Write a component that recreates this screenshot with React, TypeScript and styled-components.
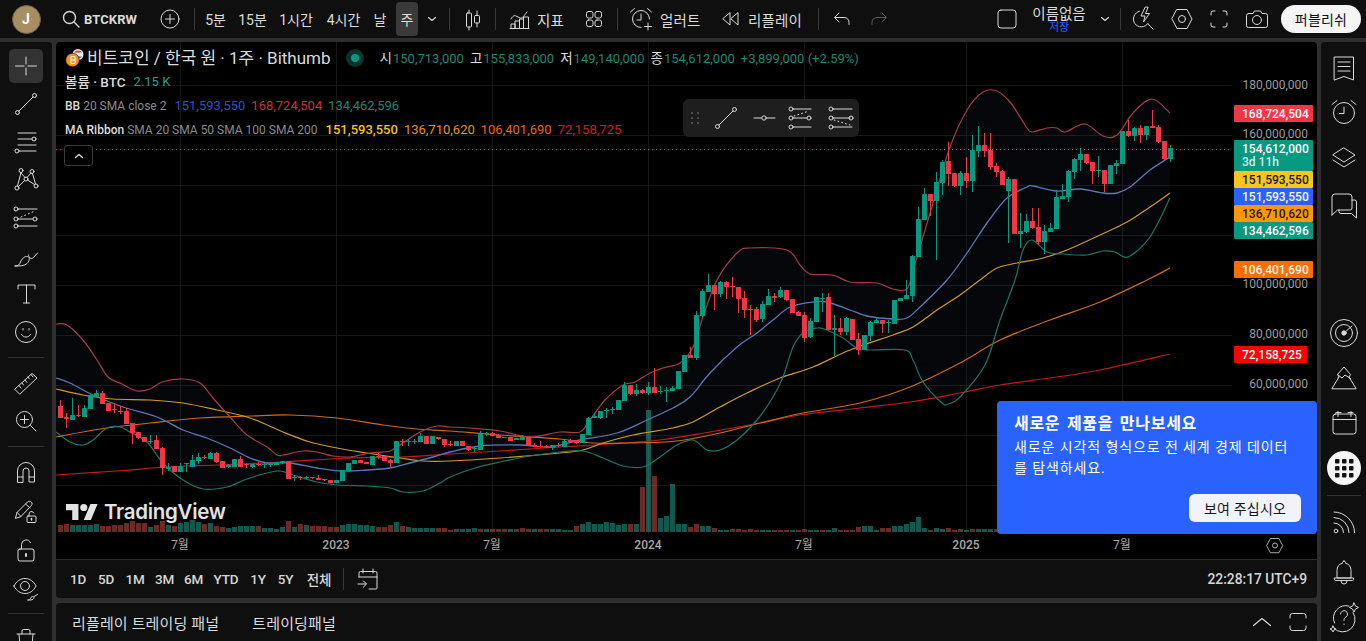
import React from "react";
import styled, { createGlobalStyle } from "styled-components";

const Global = createGlobalStyle`
  html, body { margin: 0; padding: 0; height: 100%; background: #2e2e2e; overflow: hidden; }
  #root { height: 100%; }
  * { box-sizing: border-box; }
  body { font-family: Roboto, "Noto Sans CJK KR", sans-serif; color: #dbdbdb; }
`;

const Page = styled.div`display:flex;flex-direction:column;width:1366px;height:641px;overflow:hidden;background:#2e2e2e;`;
const TopBar = styled.header`display:flex;align-items:center;height:38px;flex:none;background:#0f0f0f;`;
const Main = styled.div`display:flex;flex:1;min-height:0;margin-top:4px;gap:4px;`;
const Spacer = styled.div`flex:1;`;
const Sep = styled.div<{ $h?: number; $ml?: number }>`width:1px;height:${p => p.$h ?? 22}px;background:#3a3a3a;flex:none;margin-left:${p => p.$ml ?? 0}px;`;

const Avatar = styled.div`width:52px;height:38px;flex:none;display:flex;align-items:center;justify-content:center;
  &::before{content:"J";width:27px;height:27px;border-radius:50%;background:#a88f62;color:#fff;font:700 14px/27px Roboto,sans-serif;text-align:center;border:1px solid #6f6044;}`;
const Btn = styled.div<{ $w: number; $active?: boolean; $pl?: number; $dim?: boolean; $gap?: number }>`
  width:${p => p.$w}px;flex:none;height:34px;display:flex;align-items:center;gap:${p => p.$gap ?? 7}px;
  justify-content:${p => (p.$pl !== undefined ? "flex-start" : "center")};
  padding-left:${p => p.$pl ?? 0}px;border-radius:4px;font-size:14px;white-space:nowrap;font-weight:400;
  background:${p => (p.$active ? "#3a3a3a" : "transparent")};
  color:${p => (p.$dim ? "#5c5c5c" : "#dbdbdb")};
`;
const Symbol = styled.span`font:700 13px Roboto,sans-serif;letter-spacing:.1px;`;
const Label = styled.span`font-size:14.5px;letter-spacing:.2px;`;
const NameBox = styled.div`width:62px;flex:none;display:flex;flex-direction:column;align-items:center;line-height:1;font-size:14.5px;height:34px;padding-top:6px;`;
const Saved = styled.span`font-size:11px;color:#2962ff;margin-top:-1px;`;
const Publish = styled.div`width:80px;height:28px;margin-left:6px;margin-right:5px;flex:none;border-radius:14px;background:#f5f5f5;color:#0f0f0f;display:flex;align-items:center;justify-content:center;font-size:14px;letter-spacing:.2px;`;

const LeftBar = styled.aside`width:52px;flex:none;background:#0f0f0f;display:flex;flex-direction:column;padding-top:5px;border-top-right-radius:4px;align-items:center;overflow:hidden;`;
const ToolBtn = styled.div<{ $active?: boolean; $mt?: number }>`width:34px;height:34px;margin:${p => 2 + (p.$mt ?? 0)}px 0 2px;flex:none;display:flex;align-items:center;justify-content:center;border-radius:5px;background:${p => (p.$active ? "#333" : "transparent")};`;
const ToolSep = styled.div`width:36px;height:1px;flex:none;background:#333;margin:6px 0;`;

const RightBar = styled.aside`width:45px;flex:none;background:#0f0f0f;display:flex;flex-direction:column;align-items:center;padding-top:3px;border-top-left-radius:4px;overflow:hidden;`;
const SideBtn = styled.div<{ $mt?: number }>`width:45px;height:45px;flex:none;display:flex;align-items:center;justify-content:center;margin-top:${p => p.$mt ?? 0}px;`;
const AppsBtn = styled.div`width:34px;height:34px;border-radius:50%;background:#f5f5f5;display:flex;align-items:center;justify-content:center;`;
const SideSep = styled.div`width:34px;height:1px;background:#333;flex:none;margin:5px 0 3px;`;

const Center = styled.main`flex:1;min-width:0;display:flex;flex-direction:column;`;
const ChartPanel = styled.section`position:relative;height:518px;flex:none;background:#000;border-top-left-radius:4px;border-top-right-radius:4px;overflow:hidden;border-bottom:1px solid #2a2a2a;`;
const ChartSvg = styled.svg`display:block;width:1261px;height:518px;`;

const Legend = styled.div`position:absolute;left:9px;top:4px;display:flex;flex-direction:column;font-size:13px;`;
const LegendRow = styled.div`display:flex;align-items:center;height:24px;white-space:nowrap;`;
const Title = styled.span`font-size:17px;color:#dbdbdb;margin-left:3px;line-height:20px;`;
const LiveDot = styled.span`width:18px;height:18px;margin-left:15px;border-radius:50%;background:#06332c;display:flex;align-items:center;justify-content:center;&::after{content:"";width:8px;height:8px;border-radius:50%;background:#089981;}`;
const Ohlc = styled.span`margin-left:16px;display:flex;align-items:baseline;line-height:16px;`;
const Key = styled.span<{ $ml?: number }>`color:#dbdbdb;margin-left:${p => p.$ml ?? 6}px;margin-right:1px;font-size:13.5px;`;
const Num = styled.span<{ $c: string; $ml?: number; $b?: boolean }>`color:${p => p.$c};margin-left:${p => p.$ml ?? 0}px;font-weight:${p => (p.$b ? 500 : 400)};line-height:16px;`;
const Name = styled.span`color:#dbdbdb;font-weight:500;font-size:12px;`;
const VolName = styled.span`color:#dbdbdb;font-weight:500;font-size:13.5px;line-height:16px;`;
const Params = styled.span`color:#8a8a8a;margin-left:3px;font-size:12px;`;
const Collapse = styled.div`position:absolute;left:8px;top:103px;width:29px;height:21px;border:1px solid #3a3a3a;border-radius:3px;background:#000;display:flex;align-items:center;justify-content:center;`;

const Floating = styled.div`position:absolute;left:627px;top:57px;width:176px;height:38px;background:#1e1e1e;border-radius:6px;display:flex;align-items:center;padding-left:8px;`;
const Drag = styled.div`margin-right:6px;display:flex;`;
const FloatBtn = styled.div`width:38px;height:34px;display:flex;align-items:center;justify-content:center;`;

const Watermark = styled.div`position:absolute;left:10px;top:457px;display:flex;align-items:center;gap:6px;color:#e2e2e2;font:600 20.5px Inter,sans-serif;letter-spacing:-.3px;`;

const Popup = styled.div`position:absolute;left:941px;top:359px;width:320px;height:133px;background:#2962ff;border-radius:4px;padding:13px 17px 0;color:#fff;display:flex;flex-direction:column;
  &::after{content:"";position:absolute;right:-4px;top:62px;border-left:4px solid #2962ff;border-top:5px solid transparent;border-bottom:5px solid transparent;}`;
const PopTitle = styled.div`font-size:16px;font-weight:700;line-height:20px;letter-spacing:.7px;word-spacing:2px;`;
const PopBody = styled.div`font-size:14px;line-height:21px;margin-top:3px;letter-spacing:.9px;width:280px;`;
const PopBtn = styled.div`align-self:flex-end;width:112px;height:28px;margin-top:15px;margin-right:-1px;border-radius:6px;background:#f0f3fa;color:#131722;font-size:14px;display:flex;align-items:center;justify-content:center;letter-spacing:.2px;`;

const RangeBar = styled.div`height:38px;flex:none;background:#0f0f0f;display:flex;align-items:center;padding-left:8px;border-bottom-left-radius:4px;border-bottom-right-radius:4px;`;
const RangeBtn = styled.div<{ $w: number }>`width:${p => p.$w}px;flex:none;text-align:center;font-size:13.5px;font-weight:500;color:#d6d6d6;letter-spacing:-.2px;`;
const CalBtn = styled.div`width:46px;flex:none;display:flex;justify-content:center;`;
const Clock = styled.div`font-size:13.8px;font-weight:500;color:#d6d6d6;margin-right:10px;`;

const BottomPanel = styled.div`flex:1;margin-top:5px;background:#0f0f0f;border-top-left-radius:4px;border-top-right-radius:4px;display:flex;align-items:center;padding-left:16px;gap:33px;font-size:15px;letter-spacing:.15px;color:#dbdbdb;`;
const BottomIcons = styled.div`margin-left:auto;display:flex;align-items:center;gap:16px;padding-right:9px;`;

const AxisText = styled.text`font:400 12px Roboto,sans-serif;fill:#9c9c9c;`;
const TimeText = styled.text<{ $b?: boolean }>`font:${p => (p.$b ? 500 : 400)} 12px Roboto,"Noto Sans CJK KR",sans-serif;fill:#a8a8a8;`;
const TagText = styled.text`font:500 12px Roboto,sans-serif;`;

type IP = { s?: number; v?: number; w?: number; c?: string; children: React.ReactNode };
const I = ({ s = 28, v = 28, w = 1, c = "#d9d9d9", children }: IP) => (
  <svg width={s} height={s} viewBox={`0 0 ${v} ${v}`} fill="none" stroke={c} strokeWidth={w} strokeLinecap="round" strokeLinejoin="round">{children}</svg>
);

const Icons = {
  search: <I s={20} v={20} w={1.4}><circle cx="8.5" cy="8.5" r="6" /><path d="M13 13l5 5" /></I>,
  plus: <I s={20} v={20}><circle cx="10" cy="10" r="9" /><path d="M10 5.5v9M5.5 10h9" /></I>,
  chevron: <I s={14} v={14} w={1.1}><path d="M3.5 5.5L7 8.5l3.5-3" /></I>,
  candles: <I><path d="M10 5v3M10 22v3M18 6v4.5M18 18v4" /><rect x="7.5" y="8" width="5" height="14" rx="1" /><rect x="15.5" y="10.5" width="5" height="7.5" rx="1" /></I>,
  indicators: <I s={24} v={24}><path d="M3 12c2-3 3-4 5-3l4 2c2 .8 4-2 7-6" /><path d="M3 21v-4h4v4M7 21v-7h4.500v7M11.500 21V12h4v9M15.500 21v-11h5v11M2 21.500h19" /></I>,
  grid: <I s={18} v={18}><rect x="1.500" y="1.500" width="6.500" height="6.500" rx="2" /><rect x="10" y="1.500" width="6.500" height="6.500" rx="2" /><rect x="1.500" y="10" width="6.500" height="6.500" rx="2" /><rect x="10" y="10" width="6.500" height="6.500" rx="2" /></I>,
  alertPlus: <I s={24} v={24}><path d="M20.500 12A8.500 8.500 0 1 0 12 20.500" /><path d="M12 7v6H8M1.500 5l4-3.500M22.500 5l-4-3.500M19 16v7M15.500 19.500h7" /></I>,
  rewind: <I s={20} v={20}><path d="M9 4v12L2 10zM17 4v12l-7-6z" /></I>,
  undo: <I s={20} v={20}><path d="M7 4L2.500 8.500 7 13M3 8.500h9c3 0 5 2 5 5v2" /></I>,
  redo: <I s={20} v={20} c="#5c5c5c"><path d="M13 4l4.500 4.500L13 13M17 8.500H8c-3 0-5 2-5 5v2" /></I>,
  square: <I s={20} v={20}><rect x="1" y="1" width="18" height="18" rx="3" /></I>,
  bolt: <I s={26} v={26}><path d="M9.500 5.200a8 8 0 1 0 8.500 12.300M18 18l5 5" /><path d="M15 1.500L11 10h4l-1.500 6 6-8.500h-4l2.500-6z" /></I>,
  hex: <I s={22} v={22}><path d="M6 1.500h10L21 11l-5 9.500H6L1 11z" /><circle cx="11" cy="11" r="3.500" /></I>,
  full: <I s={18} v={18}><path d="M1 5V3a2 2 0 0 1 2-2h2M13 1h2a2 2 0 0 1 2 2v2M17 13v2a2 2 0 0 1-2 2h-2M5 17H3a2 2 0 0 1-2-2v-2" /></I>,
  camera: <I s={24} v={24}><path d="M3.500 6.500H8L9.500 4h6L17 6.500h3.500a2 2 0 0 1 2 2v10a2 2 0 0 1-2 2h-17a2 2 0 0 1-2-2v-10a2 2 0 0 1 2-2z" /><circle cx="12" cy="13" r="4.500" /></I>,
  cross: <I w={1}><path d="M14 5v7M14 16v7M3.500 14H12M16 14h8.500" /></I>,
  trend: <I><circle cx="5.500" cy="22.500" r="2" /><circle cx="22.500" cy="5.500" r="2" /><path d="M7 21L21 7" /></I>,
  fib: <I><path d="M6 5h18M6 11h14M6 17h18M7.500 23H24" /><circle cx="22" cy="11" r="2" /><circle cx="5" cy="23" r="2" /></I>,
  xabcd: <I><circle cx="9" cy="4.500" r="2" /><circle cx="20" cy="5.500" r="2" /><circle cx="14" cy="13" r="2" /><circle cx="5" cy="22" r="2" /><circle cx="24" cy="20" r="2" /><path d="M9 6.500L5.500 20M8 6L13 11.500M15 11.500l4-4.500M20.500 7.500l3 10.500M6.500 20.500L12.700 14.500M15.500 14l7 4.500" /></I>,
  gann: <I><path d="M6 5h19M6 15h15M6 22h19" /><circle cx="4" cy="5" r="2" /><circle cx="4" cy="15" r="2" /><circle cx="4" cy="22" r="2" /><circle cx="23" cy="15" r="2" /><path d="M9 13l14-6" strokeDasharray="1 3" /></I>,
  brush: <I><path d="M3 24c3.500 0 4.500-1.500 5.500-4 1-2.800 4-6 7-5.500 2.500.6 2.500 4-.5 7-2.500 2.500-7 2.500-12 2.500z" /><path d="M16.500 13c0 3 3 4.500 5 2.500l4-4.500" /></I>,
  text: <I><path d="M6 9V5h17v4M14.500 5v18M11.500 23h6" /></I>,
  smile: <I><circle cx="14" cy="14" r="10.500" /><path d="M9.500 16.500c2 3.500 7 3.500 9 0M11 10.500v1.500M17 10.500v1.500" /></I>,
  ruler: <I><path d="M3 20L20 4.500l5 4.500L8 25z" /><path d="M7 16.500l2 2.500M10 14l1.500 2M13 11l2 2.500M16 8l1.500 2M19 5.500l2 2.500" /></I>,
  zoomIn: <I><circle cx="12.500" cy="12.500" r="8" /><path d="M18.500 18.500L24 24M12.500 8.500v8M8.500 12.500h8" /></I>,
  magnet: <I><path d="M5.500 24V13a8.500 8.500 0 0 1 17 0v11h-5.500V13a3 3 0 0 0-6 0v11zM5.500 19h5.500M17 19h5.500" /></I>,
  pencilLock: <I><path d="M3.500 21l1.500-5.500L15.500 5c1.200-1 2.800-1 3.800 0s1 2.500 0 3.600L9 19.500z" /><path d="M13.500 7l4.500 4M5 15.500l4 4" /><rect x="15" y="19" width="9" height="6.500" rx="1" /><path d="M17 19v-2a2.500 2.500 0 0 1 4.800-1" /><path d="M19.500 21.500v1.500" strokeWidth="1.500" /></I>,
  lock: <I><rect x="6" y="13" width="16" height="12" rx="2" /><path d="M9.500 13V8.500a4.700 4.700 0 0 1 9-1.800" /><path d="M14 18v2" strokeWidth="2" /></I>,
  eye: <I><path d="M2 12c2.500-5 6.500-7.500 11-7.500S21.500 7 24 12c-2.500 5-6.500 7.500-11 7.500S4.500 17 2 12z" /><circle cx="13" cy="12" r="4.500" /><path d="M16 26c1.500 0 2-.5 2.500-1.800.6-1.400 2-2 3-1.500.8.600.5 1.800-.5 2.600-1 .8-3 .7-5 .7zM22 22.500l3.500-2" /></I>,
  trash: <I><path d="M5 9h18M10 9V6a1.500 1.500 0 0 1 1.500-1.500h5A1.500 1.500 0 0 1 18 6v3M7 9l1.500 18h11L21 9" /></I>,
  watch: <I s={26} v={26}><path d="M3.500 2h19v23l-9.500-3.500L3.500 25z" /><path d="M7 7h12M7 11.500h12M7 16h12" /></I>,
  alarm: <I s={28}><circle cx="14" cy="14" r="10.500" /><path d="M14 8v6.500H9.500M2 5.500l5-4M26 5.500l-5-4" /></I>,
  layers: <I s={26} v={26}><path d="M13 3l11 7-11 7-11-7zM2 15l11 7 11-7" /></I>,
  chat: <I s={28}><path d="M2 24V6a3 3 0 0 1 3-3h14a3 3 0 0 1 3 3v11a2 2 0 0 1-2 2H7.500L2 24z" /><path d="M22 9h2.500a2 2 0 0 1 2 2v16l-5-4.500H11a2 2 0 0 1-2-2V19" /></I>,
  radar: <I s={30} v={30}><circle cx="15" cy="15" r="13.500" /><circle cx="15" cy="15" r="8.500" /><circle cx="15" cy="15" r="2.200" fill="#d9d9d9" /><path d="M15 15l8-7" /></I>,
  peaks: <I s={28}><path d="M2 24.500L9 13l-1.500-2.500L14 3l6.500 7.500L19 13l7 11.500zM7.500 10.500L12 14l3-3 5.500 3.500M9 13l-1 .5" /></I>,
  calendar: <I s={28}><rect x="3" y="5" width="23" height="20" rx="2.500" /><path d="M3 10.500h23M8 2.500v5M21 2.500v5M6 3.500h5M18 3.500h5" /></I>,
  rss: <I s={26} v={26}><circle cx="5" cy="22" r="1.800" /><path d="M3 14a9.500 9.500 0 0 1 9.500 9.500M3 8.500a15 15 0 0 1 15 15M3 3a20.500 20.500 0 0 1 20.500 20.500" /></I>,
  bell: <I s={26} v={26}><path d="M13 2a1.500 1.500 0 0 1 1.500 1.500v.7c3.800.8 5.500 3.800 5.500 7.300v7.500H6v-7.500c0-3.500 1.700-6.500 5.500-7.300v-.7A1.500 1.500 0 0 1 13 2z" /><path d="M3.500 19h19v1.500a1 1 0 0 1-1 1h-17a1 1 0 0 1-1-1zM10 22a3 3 0 0 0 6 0" /></I>,
  help: <I s={32} v={32}><path d="M25 11.500a12.500 12.500 0 0 1-19 16M6.500 22A12.500 12.500 0 0 1 21 5" /><path d="M12.500 13a3.500 3.500 0 1 1 5.500 3c-1.500 1-2 1.500-2 3.500M16 23v.5" /><path d="M26 2l1.500 3 3 1.500-3 1.500L26 11l-1.500-3-3-1.500 3-1.500zM5 25l1 2 2 1-2 1-1 2-1-2-2-1 2-1z" /></I>,
  gotoDate: <I s={22} v={22}><path d="M3 9V5a1.500 1.500 0 0 1 1.500-1.500h15A1.500 1.500 0 0 1 21 5v15a1 1 0 0 1-1 1h-7M3 9h18M7 1v4M17 1v4M2 16h8M7.500 13l3 3-3 3" /></I>,
  fiDrag: <svg width="10" height="14" viewBox="0 0 10 14" fill="#4c4c4c"><rect x="0" y="1" width="2" height="2" /><rect x="6" y="1" width="2" height="2" /><rect x="0" y="6" width="2" height="2" /><rect x="6" y="6" width="2" height="2" /><rect x="0" y="11" width="2" height="2" /><rect x="6" y="11" width="2" height="2" /></svg>,
  hLine: <I><path d="M4 14h7.500M16.500 14H25" /><circle cx="14" cy="14" r="2.200" /></I>,
  ftA: <I><path d="M5 5h18M5 23h18M5 14h14" /><circle cx="3" cy="5" r="2" /><circle cx="3" cy="14" r="2" /><circle cx="3" cy="23" r="2" /><circle cx="21" cy="14" r="2" /><path d="M6 12l15-5" strokeDasharray="1 3" /></I>,
  ftB: <I><path d="M7 5h19M7 14h17M7 23h19" /><circle cx="5" cy="5" r="2" /><circle cx="5" cy="14" r="2" /><circle cx="5" cy="23" r="2" /><circle cx="25" cy="14" r="2" /><path d="M8 16l16 5" strokeDasharray="1 3" /></I>,
  up: <I s={14} v={14} w={1.4}><path d="M3.500 8.500L7 5.500l3.500 3" /></I>,
  upBig: <I s={20} v={20} w={1.2}><path d="M1.500 13.500L10 6.500l8.500 7" /></I>,
  maximize: <I s={20} v={20}><path d="M2 6V4a2.500 2.500 0 0 1 2.500-2.500h11A2.500 2.500 0 0 1 18 4v2M2 14v2a2.500 2.500 0 0 0 2.500 2.500h11A2.500 2.500 0 0 0 18 16v-2" /></I>,
};

const BtcLogo = () => (
  <svg width="19" height="20" viewBox="0 0 19 20">
    <circle cx="13" cy="6.500" r="5.500" fill="#e8e8ee" />
    <path d="M9 4.500a5 5 0 0 1 8 0z" fill="#cd3a4a" /><path d="M9 8.500a5 5 0 0 0 8 0z" fill="#3a5fcd" />
    <circle cx="7.500" cy="12" r="6.800" fill="#f7931a" stroke="#000" strokeWidth=".6" />
    <path d="M6 8.500v7M6 8.500h2.500a1.700 1.700 0 0 1 0 3.500H6h3a1.800 1.800 0 0 1 0 3.500H6" stroke="#fff" strokeWidth="1.100" fill="none" />
  </svg>
);

const AppsDots = () => (
  <svg width="20" height="20" viewBox="0 0 20 20" fill="#111">
    {[1, 8, 15].map(y => [1, 8, 15].map(x => <rect key={`${x}-${y}`} x={x} y={y} width="4.500" height="4.500" rx="1" />))}
  </svg>
);

/* u,t,b,h,l : up flag, body top, body bottom, wick top, wick bottom (page pixels) */
const C: number[][] = [
  [0,406,418,400,418],[0,417,419,413,428],[1,415,420,398,420],[0,415,416,405,417],[1,408,417,405,417],[1,395,409,394,409],[1,393,397,390,398],[0,393,404,391,404],[0,403,411,403,411],[0,409,410,403,413],
  [0,411,412,406,414],[0,411,424,408,424],[0,423,433,423,444],[0,432,438,432,439],[0,437,442,437,442],[1,441,442,435,444],[0,440,449,435,449],[0,448,468,447,475],[1,467,469,463,471],[0,466,472,466,472],
  [1,466,472,463,472],[1,463,464,463,472],[1,460,467,455,467],[1,457,461,453,464],[0,457,458,455,459],[1,453,459,452,459],[0,453,462,452,463],[0,461,468,461,468],[1,465,467,464,468],[1,459,467,459,467],
  [0,459,467,456,467],[0,464,465,463,468],[1,464,467,464,468],[0,464,465,462,466],[1,464,465,463,468],[1,464,465,463,467],[1,462,465,462,465],[1,461,463,461,464],[0,461,479,461,479],[1,477,478,475,481],
  [0,477,478,476,480],[1,477,478,476,479],[0,477,478,477,479],[0,478,480,475,480],[0,479,480,479,481],[0,480,483,480,483],[1,480,483,480,483],[1,470,481,470,481],[1,463,471,463,471],[1,460,464,460,464],
  [0,460,463,460,463],[0,462,464,462,464],[1,456,465,456,465],[0,456,457,453,459],[0,456,461,456,461],[0,460,463,459,467],[1,441,463,441,463],[0,441,442,439,446],[1,441,442,439,446],[1,441,442,439,444],
  [1,436,442,433,442],[0,436,444,436,444],[1,436,444,436,444],[0,437,439,437,440],[0,439,445,439,447],[0,444,445,441,446],[1,441,446,441,446],[0,441,446,441,446],[0,446,450,446,451],[1,448,449,447,452],
  [1,434,450,431,450],[1,433,434,432,436],[0,433,436,432,436],[0,435,438,434,438],[1,437,438,437,438],[0,437,441,437,441],[1,438,440,438,440],[1,437,440,435,440],[0,437,446,437,446],[0,445,447,443,447],
  [0,446,447,441,447],[0,446,447,445,448],[1,445,448,445,450],[0,445,446,443,447],
  [1,441,447,440,447],[0,440,442,439,443],[0,440,443,440,444],[1,434,443,434,443],[1,418,435,417,435],[1,416,418,413,418],[1,411,418,411,419],[1,410,411,408,418],[1,409,410,407,414],[1,400,410,400,410],
  [1,385,401,382,401],[0,385,394,385,395],[1,390,394,384,396],[0,390,393,389,394],[1,387,393,382,395],[0,387,393,368,393],[1,391,392,386,394],[1,390,391,387,402],[1,388,391,386,391],[1,371,389,371,389],
  [1,355,372,355,372],[0,355,358,347,358],[1,315,358,311,360],[1,291,316,289,317],[1,285,292,274,292],[0,285,294,285,310],[1,282,294,281,297],[0,282,287,281,299],[0,286,287,277,297],[0,287,299,287,313],
  [0,298,310,291,318],[0,309,310,305,335],[0,309,320,307,322],[1,304,319,301,322],[1,296,305,289,305],[0,296,298,293,302],[1,290,297,287,298],[0,290,300,290,301],[0,299,313,299,313],[0,312,316,311,316],
  [0,315,338,312,342],[1,321,337,318,338],[1,297,322,297,322],[1,298,299,293,312],[0,297,330,293,330],[1,328,330,315,356],[0,328,332,318,335],[1,318,332,317,335],[0,319,340,319,340],[0,339,350,333,355],
  [1,335,350,335,350],[1,322,336,321,341],[1,320,323,317,323],[0,320,324,320,333],[1,322,323,320,333],[1,300,324,300,324],[1,298,301,298,301],[1,295,299,280,299],[1,256,296,255,302],[1,219,257,207,257],
  [1,194,220,188,220],[0,194,201,194,216],[1,182,201,172,260],[1,162,183,160,195],[0,161,174,142,186],[0,173,186,173,187],[1,173,186,171,195],[0,173,181,157,188],[1,150,181,135,192],[1,145,151,126,157],
  [0,145,151,133,157],[0,150,167,133,170],[0,166,172,163,177],[0,171,185,170,185],[1,179,191,177,243],[0,179,234,179,234],[1,231,234,213,248],[1,221,232,214,233],[0,221,228,208,229],[0,227,242,208,245],
  [1,231,242,225,254],[1,228,232,223,232],[1,197,229,190,229],[1,196,199,184,199],[1,171,197,170,202],[1,159,172,158,179],[1,154,160,148,171],[0,154,163,154,164],[0,162,171,162,184],[1,170,171,156,177],
  [0,170,184,170,192],[1,165,184,165,184],[1,163,166,160,174],[1,131,164,131,164],[0,131,136,120,137],[1,128,136,127,141],[0,128,135,125,143],[1,126,135,126,140],[0,126,128,110,128],[0,127,142,125,143],
  [0,141,159,141,160],[1,148,159,145,162],
];

const VOL: number[] = [
  -7,-8,7,7,7,7,8,-6,-6,-7, -7,-9,-11,-9,-9,5,-7,-11,7,-6,
  9,10,12,10,-8,9,-6,-5,4,5, 6,6,6,-6,4,4,3,5,-11,5,
  -8,7,-6,-6,-6,-5,-5,7,8,8, 7,7,6,-5,-5,-7,10,-6,5,4,
  4,4,4,-4,-4,-2,3,3,3,4, -3,3,-3,-3,-3,3,-3,-4,-3,3, -3,-3,3,3,
  2,2,-6,8,10,8,8,10,9,7,8,-8,8,-45,122,-56,14,16,48,8,8,-5,-8,6,6,-4,2,2,-3,-3,-2,-3,-2,2,2,-2,-2,-2,2,-2,-3,2,2,-2,2,4,-2,-2,-2,-5,6,6,2,-4,-4,6,6,8,10,15,4,-2,4,3,-4,-2,
  -3,2,-3,3,3,3,-3,
];

type P = [number, number][];
const UPPER: P = [[56,324],[67,325],[83,340],[97,360],[108,377],[122,384],[137,391],[150,389],[162,382],[183,379],[200,383],[213,398],[230,417],[247,435],[267,447],[277,455],[283,455],[303,451],[317,452],[333,456],[350,457],[370,453],[390,451],[403,443],[420,432],[437,426],[450,427],[470,428],[500,431],[530,437],[560,432],[580,432],[590,420],[605,400],[623,385],[635,382],[650,373],[663,368],[680,363],[693,347],[703,317],[717,280],[737,253],[750,248],[787,250],[800,265],[810,274],[833,275],[850,282],[877,283],[893,289],[907,289],[913,270],[918,254],[933,203],[950,147],[967,110],[983,92],[997,91],[1010,102],[1020,117],[1027,128],[1032,132],[1047,128],[1057,128],[1065,132],[1085,124],[1103,136],[1117,135],[1133,113],[1152,99],[1170,113]];
const MID: P = [[56,378],[70,383],[93,395],[123,407],[157,417],[183,430],[207,438],[230,448],[250,458],[267,463],[290,463],[317,468],[343,471],[367,470],[390,468],[410,463],[433,457],[450,452],[480,446],[520,445],[550,447],[580,440],[617,433],[647,420],[673,408],[690,397],[710,373],[737,347],[757,333],[773,320],[790,307],[813,302],[827,302],[850,310],[867,316],[893,319],[907,318],[920,307],[947,280],[967,253],[987,223],[1007,198],[1027,187],[1033,186],[1057,191],[1080,189],[1103,193],[1117,193],[1130,187],[1150,170],[1170,157]];
const LOWER: P = [[56,432],[70,442],[83,445],[93,440],[107,428],[120,427],[130,432],[147,442],[163,463],[183,480],[203,489],[227,487],[247,479],[267,473],[280,471],[293,475],[317,482],[337,485],[367,486],[390,488],[403,492],[423,491],[440,483],[450,477],[475,468],[500,462],[530,456],[560,452],[583,451],[603,458],[623,466],[643,467],[660,457],[677,445],[693,440],[707,450],[720,450],[737,440],[757,420],[773,397],[783,377],[793,347],[803,333],[817,328],[827,330],[843,338],[857,348],[870,350],[905,350],[913,360],[923,382],[942,403],[948,404],[960,397],[985,365],[1000,320],[1015,280],[1023,250],[1032,240],[1047,252],[1063,254],[1087,255],[1103,251],[1115,252],[1128,257],[1150,237],[1170,198]];
const MA50: P = [[56,389],[83,395],[113,399],[150,400],[183,403],[217,410],[250,418],[283,432],[310,442],[337,448],[367,453],[400,458],[423,461],[450,461],[500,458],[560,453],[583,450],[603,443],[633,435],[673,428],[693,422],[720,407],[747,393],[780,378],[813,367],[850,350],[893,335],[913,327],[937,310],[960,295],[980,280],[997,268],[1017,263],[1043,258],[1067,250],[1100,235],[1127,222],[1150,207],[1170,193]];
const MA100: P = [[56,437],[100,429],[150,423],[200,418],[250,416],[290,415],[337,418],[383,425],[417,429],[450,431],[500,435],[560,439],[593,443],[627,443],[677,441],[720,433],[760,423],[803,413],[860,403],[910,387],[960,363],[1000,340],[1050,320],[1100,302],[1147,280],[1170,268]];
const MA200: P = [[56,475],[117,471],[167,467],[217,465],[283,462],[350,458],[400,457],[450,454],[500,451],[560,447],[610,444],[660,440],[710,432],[760,423],[800,415],[860,408],[910,402],[960,393],[1000,385],[1050,378],[1100,370],[1170,354]];

const smooth = (p: P) => {
  let d = `M${p[0][0]} ${p[0][1]}`;
  for (let i = 0; i < p.length - 1; i++) {
    const a = p[Math.max(0, i - 1)], b = p[i], c = p[i + 1], e = p[Math.min(p.length - 1, i + 2)];
    d += `C${(b[0] + (c[0] - a[0]) / 6).toFixed(1)} ${(b[1] + (c[1] - a[1]) / 6).toFixed(1)} ${(c[0] - (e[0] - b[0]) / 6).toFixed(1)} ${(c[1] - (e[1] - b[1]) / 6).toFixed(1)} ${c[0]} ${c[1]}`;
  }
  return d;
};
const band = () => {
  const a = smooth(UPPER);
  const r = [...LOWER].reverse();
  return `${a}L${smooth(r).slice(1)}Z`;
};

const V_GRID = [180, 336, 492, 648, 804, 966, 1122];
const H_GRID = [85, 135, 185, 235, 285, 335, 385, 435, 485];
const AXIS: [string, number][] = [["180,000,000", 85], ["160,000,000", 134], ["100,000,000", 284], ["80,000,000", 334], ["60,000,000", 384]];
const TIMES: [string, number, boolean][] = [["7월", 180, false], ["2023", 336, true], ["7월", 492, false], ["2024", 648, true], ["7월", 804, false], ["2025", 966, true], ["7월", 1122, false]];
const TAGS: [string, number, number, string, string, number][] = [
  ["168,724,504", 105, 17, "#f23645", "#fff", 79],
  ["151,593,550", 171, 17, "#f7c51e", "#131722", 79],
  ["151,593,550", 188, 17, "#2962ff", "#fff", 79],
  ["136,710,620", 205, 17, "#ff9800", "#131722", 79],
  ["134,462,596", 222, 17, "#089981", "#fff", 79],
  ["106,401,690", 261, 17, "#ff6d00", "#fff", 79],
  ["72,158,725", 346, 17, "#f00", "#fff", 73],
];

const Chart = () => (
  <ChartSvg viewBox="56 42 1261 518">
    {V_GRID.map(x => <path key={x} d={`M${x + .5} 42V534`} stroke="#161616" />)}
    {H_GRID.map(y => <path key={y} d={`M56 ${y + .5}H1232`} stroke="#161616" />)}
    <path d={band()} fill="#5a80c8" fillOpacity=".045" />
    {VOL.map((v, i) => {
      const h = Math.abs(v);
      return <rect key={i} x={58 + 6 * i} y={532 - h} width="5" height={h} fill={v > 0 ? "rgba(38,166,145,.52)" : "rgba(225,85,80,.48)"} />;
    })}
    <path d={smooth(MA200)} stroke="#c01c1c" strokeWidth="1.2" fill="none" />
    <path d={smooth(MA100)} stroke="#cc6a1e" strokeWidth="1.2" fill="none" />
    <path d={smooth(MA50)} stroke="#cf9a2c" strokeWidth="1.2" fill="none" />
    <path d={smooth(UPPER)} stroke="#a63c48" strokeWidth="1.2" fill="none" />
    <path d={smooth(LOWER)} stroke="#1f7565" strokeWidth="1.2" fill="none" />
    <path d={smooth(MID)} stroke="#5c78b8" strokeWidth="1.3" fill="none" />
    {C.map((c, i) => {
      const x = 60 + 6 * i;
      const col = c[0] ? "#089981" : "#f23645";
      return (
        <g key={i} fill={col}>
          <rect x={x} y={c[3]} width="1" height={Math.max(1, c[4] - c[3])} />
          <rect x={x - 2} y={c[1]} width="5" height={Math.max(1, c[2] - c[1])} rx=".5" />
        </g>
      );
    })}
    <path d="M56 149.500H1232" stroke="#089981" strokeDasharray="1 3" />
    {AXIS.map(([t, y]) => <AxisText key={t} x="1308" y={y + 4} textAnchor="end">{t}</AxisText>)}
    {TIMES.map(([t, x, b], i) => <TimeText key={i} $b={b} x={x} y="549" textAnchor="middle">{t}</TimeText>)}
    {TAGS.map(([t, y, h, bg, fg, w], i) => (
      <g key={i}>
        <rect x="1234" y={y} width={w} height={h} rx="1" fill={bg} />
        <TagText x="1242" y={y + 13} fill={fg}>{t}</TagText>
      </g>
    ))}
    <rect x="1234" y="140" width="79" height="31" rx="1" fill="#089981" />
    <TagText x="1242" y="153" fill="#fff">154,612,000</TagText>
    <TagText x="1242" y="166" fill="#cdeee8">3d 11h</TagText>
    <g transform="translate(1268 538)" fill="none" stroke="#b0b0b0">
      <path d="M2.500 0.500h9l4 7.500-4 7.500h-9l-4-7.500z" transform="scale(.95)" />
      <circle cx="7" cy="7.500" r="2.500" />
    </g>
  </ChartSvg>
);

const LEFT_TOP = ["trend", "fib", "xabcd", "gann", "brush", "text", "smile"] as const;

export default function App() {
  return (
    <Page>
      <Global />
      <TopBar>
        <Avatar />
        <Btn $w={94} $pl={9} $gap={3}>{Icons.search}<Symbol>BTCKRW</Symbol></Btn>
        <Btn $w={48}>{Icons.plus}</Btn>
        <Sep />
        <Btn $w={41}>5분</Btn>
        <Btn $w={33}>15분</Btn>
        <Btn $w={54}>1시간</Btn>
        <Btn $w={41}>4시간</Btn>
        <Btn $w={32}>날</Btn>
        <Btn $w={22} $active>주</Btn>
        <Btn $w={28}>{Icons.chevron}</Btn>
        <Sep $ml={3} />
        <Btn $w={45}>{Icons.candles}</Btn>
        <Sep />
        <Btn $w={78} $pl={12} $gap={5}>{Icons.indicators}<Label>지표</Label></Btn>
        <Btn $w={40}>{Icons.grid}</Btn>
        <Sep $ml={3} />
        <Btn $w={94} $pl={11}>{Icons.alertPlus}<Label>얼러트</Label></Btn>
        <Btn $w={106} $pl={9}>{Icons.rewind}<Label>리플레이</Label></Btn>
        <Sep />
        <Btn $w={46}>{Icons.undo}</Btn>
        <Btn $w={28}>{Icons.redo}</Btn>
        <Spacer />
        <Btn $w={42}>{Icons.square}</Btn>
        <NameBox>이름없음<Saved>저장</Saved></NameBox>
        <Btn $w={30}>{Icons.chevron}</Btn>
        <Sep />
        <Btn $w={44}>{Icons.bolt}</Btn>
        <Btn $w={34}>{Icons.hex}</Btn>
        <Btn $w={40}>{Icons.full}</Btn>
        <Btn $w={36}>{Icons.camera}</Btn>
        <Publish>퍼블리쉬</Publish>
      </TopBar>
      <Main>
        <LeftBar>
          <ToolBtn $active>{Icons.cross}</ToolBtn>
          {LEFT_TOP.map(k => <ToolBtn key={k}>{Icons[k]}</ToolBtn>)}
          <ToolSep />
          <ToolBtn>{Icons.ruler}</ToolBtn>
          <ToolBtn>{Icons.zoomIn}</ToolBtn>
          <ToolSep />
          <ToolBtn>{Icons.magnet}</ToolBtn>
          <ToolBtn $mt={1}>{Icons.pencilLock}</ToolBtn>
          <ToolBtn $mt={1}>{Icons.lock}</ToolBtn>
          <ToolBtn>{Icons.eye}</ToolBtn>
          <ToolSep />
          <ToolBtn>{Icons.trash}</ToolBtn>
        </LeftBar>
        <Center>
          <ChartPanel>
            <Chart />
            <Legend>
              <LegendRow>
                <BtcLogo />
                <Title>비트코인 / 한국 원 · 1주 · Bithumb</Title>
                <LiveDot />
                <Ohlc>
                  <Key $ml={0}>시</Key><Num $c="#1d8672">150,713,000</Num>
                  <Key>고</Key><Num $c="#1d8672">155,833,000</Num>
                  <Key>저</Key><Num $c="#1d8672">149,140,000</Num>
                  <Key>종</Key><Num $c="#1d8672">154,612,000</Num>
                  <Num $c="#1d8672" $ml={6}>+3,899,000 (+2.59%)</Num>
                </Ohlc>
              </LegendRow>
              <LegendRow><VolName>볼륨 · BTC</VolName><Num $c="#2a9d8a" $ml={8}>2.15 K</Num></LegendRow>
              <LegendRow>
                <Name>BB</Name><Params>20 SMA close 2</Params>
                <Num $c="#2b50c8" $ml={8}>151,593,550</Num>
                <Num $c="#c8323f" $ml={6}>168,724,504</Num>
                <Num $c="#1d8672" $ml={6}>134,462,596</Num>
              </LegendRow>
              <LegendRow>
                <Name>MA Ribbon</Name><Params>SMA 20 SMA 50 SMA 100 SMA 200</Params>
                <Num $c="#f0c420" $ml={8} $b>151,593,550</Num>
                <Num $c="#e8930e" $ml={6}>136,710,620</Num>
                <Num $c="#e8660c" $ml={6}>106,401,690</Num>
                <Num $c="#d11c1c" $ml={6}>72,158,725</Num>
              </LegendRow>
            </Legend>
            <Collapse>{Icons.up}</Collapse>
            <Floating>
              <Drag>{Icons.fiDrag}</Drag>
              <FloatBtn>{Icons.trend}</FloatBtn>
              <FloatBtn>{Icons.hLine}</FloatBtn>
              <FloatBtn>{Icons.ftA}</FloatBtn>
              <FloatBtn>{Icons.ftB}</FloatBtn>
            </Floating>
            <Watermark>
              <svg width="32" height="20" viewBox="0 2 36 22" fill="#e2e2e2"><path d="M14 22H7V11H0V4h14v18zM28 22h-8l7.500-18h8L28 22z" /><circle cx="20" cy="8" r="4" /></svg>
              <span>TradingView</span>
            </Watermark>
            <Popup>
              <PopTitle>새로운 제품을 만나보세요</PopTitle>
              <PopBody>새로운 시각적 형식으로 전 세계 경제 데이터를 탐색하세요.</PopBody>
              <PopBtn>보여 주십시오</PopBtn>
            </Popup>
          </ChartPanel>
          <RangeBar>
            <RangeBtn $w={28}>1D</RangeBtn>
            <RangeBtn $w={28}>5D</RangeBtn>
            <RangeBtn $w={30}>1M</RangeBtn>
            <RangeBtn $w={29}>3M</RangeBtn>
            <RangeBtn $w={29}>6M</RangeBtn>
            <RangeBtn $w={36}>YTD</RangeBtn>
            <RangeBtn $w={28}>1Y</RangeBtn>
            <RangeBtn $w={27}>5Y</RangeBtn>
            <RangeBtn $w={40}>전체</RangeBtn>
            <Sep $ml={4} />
            <CalBtn>{Icons.gotoDate}</CalBtn>
            <Spacer />
            <Clock>22:28:17 UTC+9</Clock>
          </RangeBar>
          <BottomPanel>
            <span>리플레이 트레이딩 패널</span>
            <span>트레이딩패널</span>
            <BottomIcons>{Icons.upBig}{Icons.maximize}</BottomIcons>
          </BottomPanel>
        </Center>
        <RightBar>
          <SideBtn>{Icons.watch}</SideBtn>
          <SideBtn>{Icons.alarm}</SideBtn>
          <SideBtn>{Icons.layers}</SideBtn>
          <SideBtn $mt={2}>{Icons.chat}</SideBtn>
          <SideBtn $mt={83}>{Icons.radar}</SideBtn>
          <SideBtn>{Icons.peaks}</SideBtn>
          <SideBtn>{Icons.calendar}</SideBtn>
          <SideBtn><AppsBtn><AppsDots /></AppsBtn></SideBtn>
          <SideSep />
          <SideBtn>{Icons.rss}</SideBtn>
          <SideBtn $mt={5}>{Icons.bell}</SideBtn>
          <SideBtn>{Icons.help}</SideBtn>
        </RightBar>
      </Main>
    </Page>
  );
}
